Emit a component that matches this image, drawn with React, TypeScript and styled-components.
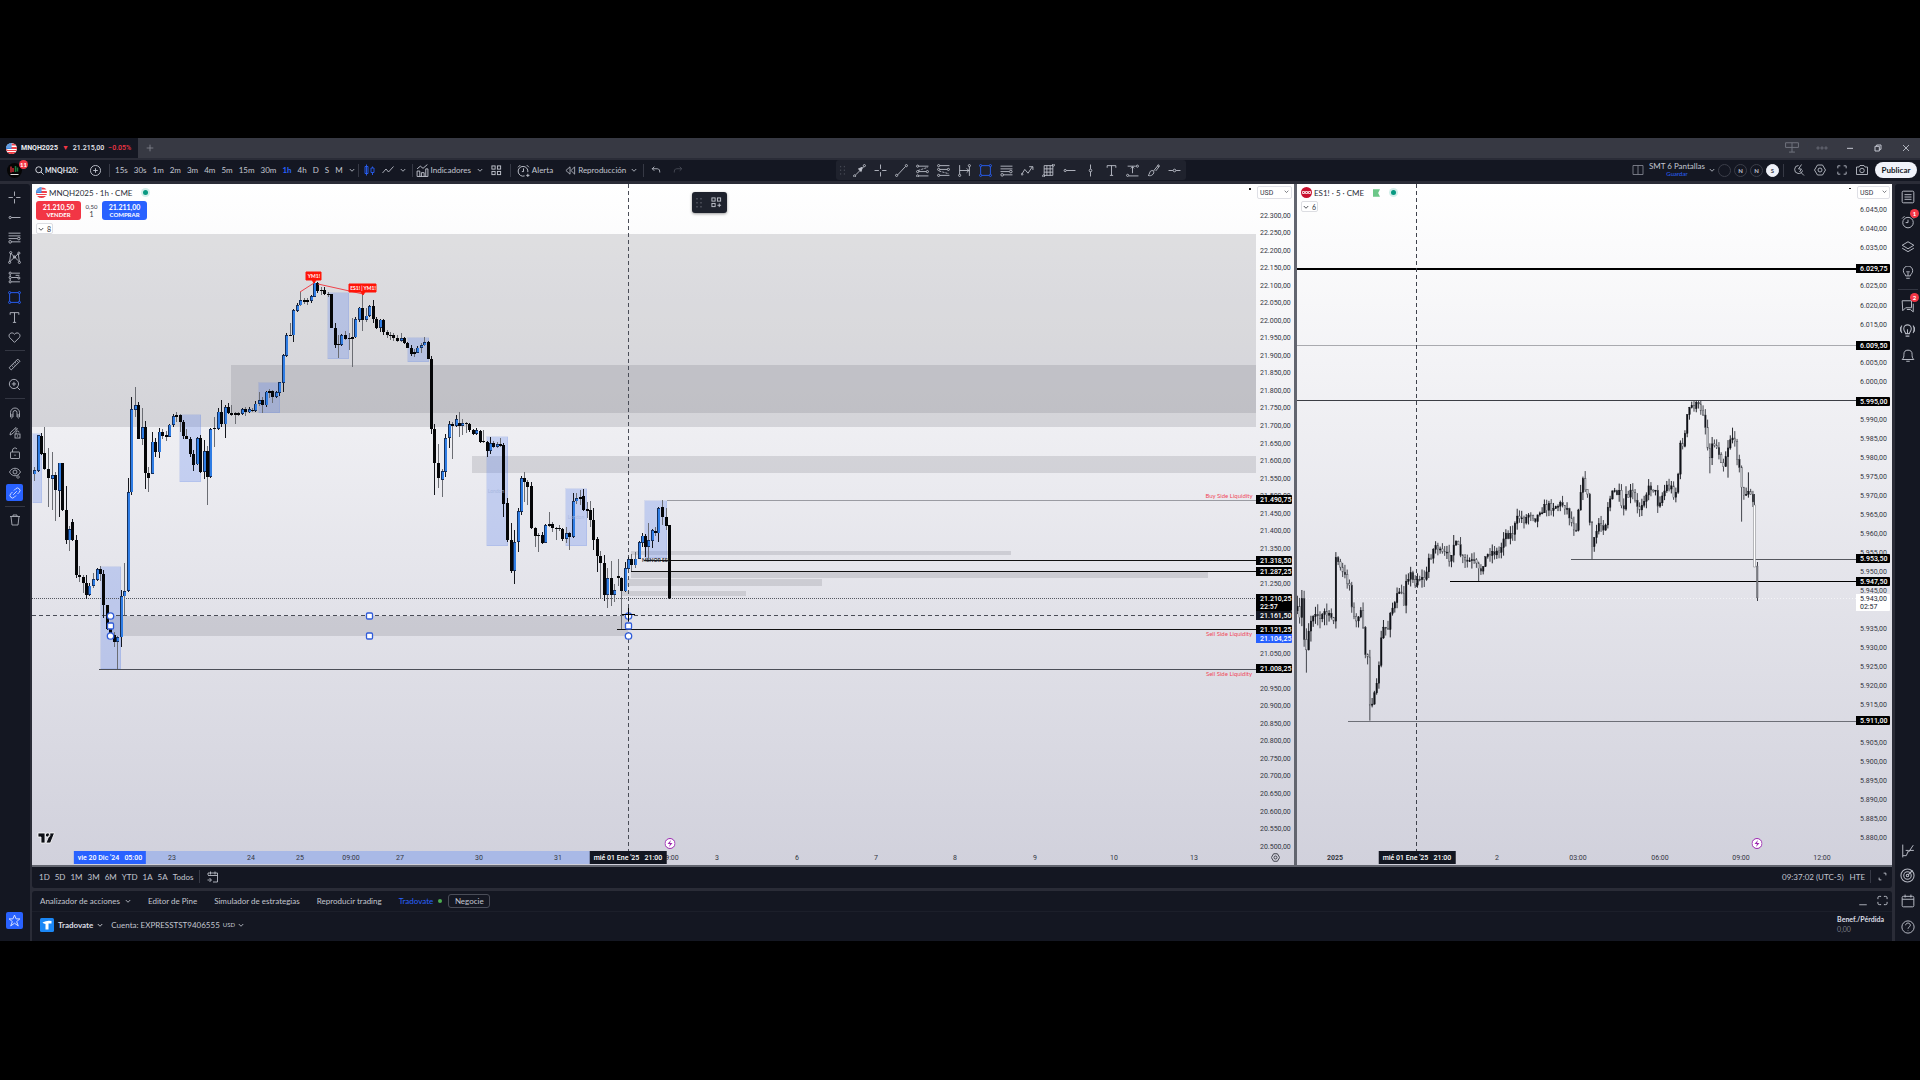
import React from "react";
import styled, { createGlobalStyle, css } from "styled-components";

const color = {
  panel: "#141722",
  frame: "#2a2c37",
  tabs: "#373943",
  text: "#c3c6d0",
  dim: "#787b86",
  blue: "#2962ff",
  red: "#f23645",
  ink: "#131722",
};

const GlobalStyle = createGlobalStyle`
  * { box-sizing: border-box; }
  body { margin: 0; background: #000; }
  button, select, input { font: inherit; color: inherit; margin: 0; padding: 0; border: 0; background: none; }
`;

/* ---------- icons ---------- */

const icons: Record<string, React.ReactNode> = {
  cross: <path d="M12 1v8M12 15v8M1 12h8M15 12h8" />,
  hray: <><circle cx="4" cy="12" r="2" /><path d="M6 12h17" /></>,
  fib: <><path d="M1 4h22M1 9h22M1 14h16M6 20h17" /><circle cx="20" cy="14" r="2.4" /><circle cx="4" cy="20" r="2.4" /></>,
  pattern: <><path d="M3 20 5 4l14 14M3 20 19 5l2 15M9 11l6 1" /><circle cx="5" cy="3" r="2" /><circle cx="20" cy="4" r="2" /><circle cx="3" cy="21" r="2" /><circle cx="21" cy="21" r="2" /><circle cx="12" cy="11" r="2" /></>,
  position: <><path d="M6 4h16M6 12h13M6 20h16M4 6v12M14 8h7" /><circle cx="4" cy="4" r="2" /><circle cx="4" cy="12" r="2" fill={color.panel} /><circle cx="4" cy="20" r="2" /><circle cx="20" cy="13" r="2" /></>,
  rect: <><path d="M5 3h14M5 21h14M3 5v14M21 5v14" /><circle cx="3" cy="3" r="2" /><circle cx="21" cy="3" r="2" /><circle cx="3" cy="21" r="2" /><circle cx="21" cy="21" r="2" /></>,
  text: <path d="M4 7V3h16v4M12 3v18M9 21h6" />,
  heart: <path d="M12 21 3 12C-1 6 7 0 12 6c5-6 13 0 9 6z" />,
  ruler: <path d="M2 18 18 2l4 4L6 22zM7 14l2 2M10 11l2 2M13 8l2 2M16 5l2 2" />,
  zoom: <><circle cx="11" cy="11" r="8.5" /><path d="m17 17 5 5M11 7v8M7 11h8" /></>,
  magnet: <><path d="M3 20V11a9 9 0 0 1 18 0v9h-5v-9a4 4 0 0 0-8 0v9zM3 16h5M16 16h5" /><path d="M5 23v1M19 23v1" /></>,
  pencilLock: <><path d="m2 16 1-5L14 1l3 3L6 14zM12 3l3 3" /><rect x="12" y="14" width="10" height="8" /><path d="M14 14v-3a3 3 0 0 1 6 0" /><circle cx="17" cy="18" r=".6" /></>,
  lock: <><rect x="3" y="10" width="18" height="13" rx="1" /><path d="M7 10V6a5 5 0 0 1 9-2M12 15v3" /></>,
  eye: <><path d="M1 10c5-10 17-10 22 0-5 10-17 10-22 0z" /><circle cx="12" cy="10" r="4" /><path d="m15 20 3-3 3 3-3 3z" /></>,
  link: <g transform="rotate(-45 12 12)"><path d="M10 7H5a5 5 0 0 0 0 10h5M14 7h5a5 5 0 0 1 0 10h-5M7 12h10" /></g>,
  trash: <path d="M2 5h20M8 5V2h8v3M4 5l2 17h12l2-17" />,
  star: <path d="m12 2 3 7h7l-6 5 3 8-7-5-7 5 3-8-6-5h7z" />,
  list: <><rect x="2" y="2" width="20" height="20" rx="2" /><path d="M6 8h12M6 12h12M6 16h12" /></>,
  alarm: <><circle cx="12" cy="13" r="9" /><path d="M12 8v5H8M2 6l4-4M22 6l-4-4" /></>,
  alarmPlus: <><path d="M20 15a9 9 0 1 0-6 7M12 8v6H9M2 6l4-4M22 6l-4-4M20 18v6M17 21h6" /></>,
  layers: <><path d="m12 3 10 6-10 6L2 9zM2 14l10 6 10-6" /></>,
  bulb: <><path d="M8 17c0-3-4-4-4-9a8 8 0 0 1 16 0c0 5-4 6-4 9zM9 21h6M12 17v-6M9 10h6" /></>,
  chat: <path d="M2 3h16v12H8l-5 5zM21 8v14l-5-4h-6" />,
  live: <><path d="M9 17c0-2-3-4-3-8a6 6 0 0 1 12 0c0 4-3 6-3 8zM9 21h6M12 16v-6M3 4c-2 4-2 8 0 12M21 4c2 4 2 8 0 12M0 6v8M24 6v8" /></>,
  bell: <path d="M2 18h20c-3-3-3-5-3-9a7 7 0 0 0-14 0c0 4 0 6-3 9zM9 21h6" />,
  dom: <path d="M3 1v22M3 20h6l4-9h9M13 14l8-12M8 11h4" />,
  radar: <><circle cx="12" cy="12" r="10.5" /><circle cx="12" cy="12" r="6" /><circle cx="12" cy="12" r="2" /><path d="m13 11 7-7" /></>,
  calendar: <><rect x="2" y="4" width="20" height="18" rx="2" /><path d="M2 9h20M7 1v5M17 1v5" /></>,
  help: <><circle cx="12" cy="12" r="10.5" /><path d="M8 9c0-5 8-5 8 0 0 3-4 3-4 6M12 18v1" /></>,
  search: <><circle cx="10" cy="10" r="8" /><path d="m16 16 7 7" /></>,
  plusRing: <><circle cx="12" cy="12" r="11" /><path d="M12 7v10M7 12h10" /></>,
  candles: <><path d="M5 1v22M2 5h6v14H2zM17 5v3M17 18v4M14 8h6v9h-6z" /></>,
  line: <path d="m1 18 7-8 5 6L23 5" />,
  indicators: <><path d="M2 9l6-5 5 4 8-7M2 23V13h5v10M10 23V16h5v7M18 23V9h4v14M2 23h20" /></>,
  grid: <><rect x="2" y="2" width="7" height="7" /><rect x="14" y="2" width="7" height="7" /><rect x="2" y="14" width="7" height="7" /><rect x="14" y="14" width="7" height="7" /></>,
  gridPlus: <><rect x="2" y="2" width="7" height="7" /><rect x="14" y="2" width="7" height="7" /><rect x="2" y="14" width="7" height="7" /><path d="M18 14v8M14 18h8" /></>,
  rewind: <path d="M11 4v16L2 12zM21 4v16l-8-8z" />,
  undo: <path d="M8 4 3 9l5 5M3 9h12c5 0 6 4 6 9" />,
  redo: <path d="m16 4 5 5-5 5M21 9H9c-5 0-6 4-6 9" />,
  grip: <path d="M8 2v3M16 2v3M8 10v3M16 10v3M8 18v3M16 18v3" />,
  arrow: <><path d="M5 20 20 5" /><path d="m17 6-7 3 5 5z" fill="currentColor" /><circle cx="3" cy="22" r="2" /><circle cx="21" cy="3" r="2" /></>,
  trend: <><path d="M5 20 19 5" /><circle cx="3" cy="21" r="2" /><circle cx="21" cy="3" r="2" /></>,
  longPos: <><path d="M5 4h18M5 14h14M5 22h18" /><path d="m4 12 18-6" strokeDasharray="4 2" /><circle cx="3" cy="4" r="2" /><circle cx="3" cy="14" r="2" /><circle cx="3" cy="22" r="2" /><circle cx="21" cy="14" r="2" /></>,
  shortPos: <><path d="M5 3h18M5 10h14M5 21h18" /><path d="m4 13 18 5" strokeDasharray="4 2" /><circle cx="3" cy="3" r="2" /><circle cx="3" cy="10" r="2" /><circle cx="3" cy="21" r="2" /><circle cx="21" cy="10" r="2" /></>,
  range: <><path d="M3 2v17M21 5v17M3 12h18M16 8l4 4-4 4" /><circle cx="3" cy="21" r="2" /><circle cx="21" cy="3" r="2" /></>,
  wave: <><path d="m2 18 5-8 6 7 8-12M15 5h7v6" /><circle cx="2" cy="19" r="1.5" /></>,
  table: <><path d="M4 3h16v18H4zM4 9h16M4 15h16M9 3v18M15 3v18" /><circle cx="3" cy="22" r="2" /><circle cx="21" cy="2" r="2" /></>,
  vline: <><path d="M12 1v8M12 14v9" /><circle cx="12" cy="12" r="2.4" /></>,
  anchored: <><path d="M3 4h15M12 5v12M9 8l3-3 3 3M5 22h18" /><circle cx="3" cy="21" r="2" /><circle cx="21" cy="4" r="2" /></>,
  brush: <><path d="M2 21c4-1 1-8 7-9 4 0 5 4 2 7s-6 3-9 2zM12 13 20 3M16 13l7-9" /><circle cx="21" cy="3" r="1.5" /></>,
  hline: <><path d="M1 12h8M15 12h8" /><circle cx="12" cy="12" r="2.4" /></>,
  layout: <path d="M2 3h20v18H2zM12 3v18" />,
  quick: <><path d="M19 13a8 8 0 1 1-8-10M16 17l6 6M17 1l-6 9h6l-4 6" /></>,
  settings: <><path d="M7 2h10l6 10-6 10H7L1 12z" /><circle cx="12" cy="12" r="4" /></>,
  full: <path d="M2 8V2h6M16 2h6v6M22 16v6h-6M8 22H2v-6" />,
  camera: <><path d="M1 6h5l2-3h8l2 3h5v15H1z" /><circle cx="12" cy="13" r="4.5" /></>,
  screen: <path d="M1 3h22v8H1zM12 3v16M7 19h10" />,
  dots: <><circle cx="4" cy="12" r="2.2" /><circle cx="12" cy="12" r="2.2" /><circle cx="20" cy="12" r="2.2" /></>,
  minimize: <path d="M3 13h18" />,
  restore: <path d="M3 7h13v14H3zM8 7V3h13v13h-5" />,
  close: <path d="m3 3 18 18M21 3 3 21" />,
  plus: <path d="M12 2v20M2 12h20" />,
  goto: <path d="M2 8V4h19v18h-9M2 9h19M7 1v6M16 1v6M1 18h7M5 14l4 4-4 4" />,
  corners: <path d="M15 3h6v6M3 15v6h6" />,
  expand: <path d="M2 9V6q0-3 3-3h4M15 3h4q3 0 3 3v3M22 15v3q0 3-3 3h-4M9 21H5q-3 0-3-3v-3" />,
  low: <path d="M3 21h18" />,
  chevron: <path d="m3 8 9 9 9-9" />,
};

function Icon({ name, size = 13, width = 1.7 }: { name: string; size?: number; width?: number }) {
  return (
    <svg width={size} height={size} viewBox="0 0 24 24" fill="none" stroke="currentColor" strokeWidth={width} aria-hidden="true">
      {icons[name]}
    </svg>
  );
}
const Chevron = () => <Icon name="chevron" size={6} width={3.4} />;

function UsFlag() {
  return (
    <svg width="11" height="11" viewBox="0 0 22 22" aria-hidden="true">
      <clipPath id="flagRound"><circle cx="11" cy="11" r="11" /></clipPath>
      <g clipPath="url(#flagRound)">
        <path fill="#fff" d="M0 0h22v22H0z" />
        <path fill="#ef4048" d="M11 1h11v4H11zM11 8h11v4H0v4h22v-2H0zM0 18h22v4H0z" />
        <path fill="#3b86dc" d="M0 0h11v12H0z" />
        <path fill="#cfe3fb" d="M3 3h2v2H3zM7 3h2v2H7zM3 7h2v2H3zM7 7h2v2H7z" />
      </g>
    </svg>
  );
}

/* ---------- shell ---------- */

const Page = styled.div`
  height: 100vh;
  min-height: 640px;
  padding: 138px 0 139px;
  background: #000;
  color: ${color.text};
  font: 8px/10px Lato, "Liberation Sans", sans-serif;
`;
const Shell = styled.div`
  height: 100%;
  display: flex;
  flex-direction: column;
  background: ${color.frame};
  overflow: hidden;
`;
const TabBar = styled.header`
  flex: none;
  display: flex;
  align-items: center;
  height: 20px;
  background: ${color.tabs};
`;
const Tab = styled.button`
  display: flex;
  align-items: center;
  gap: 4px;
  width: 138px;
  height: 20px;
  padding-left: 6px;
  background: ${color.panel};
  color: #e8eaf0;
  font-family: Roboto, sans-serif;
  font-size: 7px;
  font-weight: 500;
  white-space: nowrap;
  b { font-weight: 700; }
  span { color: ${color.red}; }
`;
const Spacer = styled.div<{ $grow?: number }>`flex: ${(p) => p.$grow ?? 1};`;
const IconButton = styled.button<{ $w?: number; $tone?: string }>`
  flex: none;
  display: flex;
  align-items: center;
  justify-content: center;
  width: ${(p) => p.$w ?? 21}px;
  height: 20px;
  color: ${(p) => p.$tone ?? color.text};
`;
const Divider = styled.i<{ $gap?: number }>`
  flex: none;
  width: 1px;
  height: 13px;
  margin: 0 ${(p) => p.$gap ?? 8}px;
  background: #363945;
`;

const Toolbar = styled.div`
  flex: none;
  display: flex;
  align-items: center;
  height: 21px;
  margin: 2px 0 3px;
  padding-bottom: 1px;
  background: ${color.panel};
  white-space: nowrap;
`;
const Avatar = styled.button`
  position: relative;
  display: flex;
  align-items: center;
  width: 29px;
  height: 20px;
  padding-left: 7px;
  margin-right: 6px;
`;
const Badge = styled.span`
  position: absolute;
  top: 0;
  right: 1px;
  min-width: 9px;
  height: 9px;
  border-radius: 5px;
  background: ${color.red};
  color: #fff;
  font-size: 6px;
  line-height: 9px;
  font-weight: 700;
  text-align: center;
`;
const SymbolSearch = styled.label`
  display: flex;
  align-items: center;
  gap: 1px;
  width: 46px;
  color: #e1e3ea;
  input { width: 36px; font-weight: 700; font-size: 7px; outline: 0; }
`;
const Row = styled.div<{ $gap?: number; $pad?: number }>`
  display: flex;
  align-items: center;
  gap: ${(p) => p.$gap ?? 0}px;
  padding-left: ${(p) => p.$pad ?? 0}px;
`;
const Interval = styled.button<{ $on?: boolean }>`
  ${(p) => p.$on && css`color: ${color.blue}; font-weight: 700;`}
`;
const ToolLabel = styled.button`
  display: flex;
  align-items: center;
  gap: 2px;
`;
const DrawBar = styled.div`
  display: flex;
  align-items: center;
  height: 20px;
  padding-right: 1px;
  border-radius: 3px;
  background: #1f222d;
`;
const LayoutName = styled.button`
  width: 58px;
  line-height: 7px;
  text-align: center;
  small { display: block; font-size: 6px; color: ${color.blue}; }
`;
const Ring = styled.button<{ $on?: boolean }>`
  width: 13px;
  height: 13px;
  border: 1px solid #3b3e49;
  border-radius: 50%;
  font-size: 6px;
  font-weight: 700;
  line-height: 11px;
  ${(p) => p.$on && css`background: #eff1f8; border-color: #eff1f8; color: #42454f;`}
`;
const Publish = styled.button`
  width: 42px;
  height: 16px;
  margin: 0 3px 0 3px;
  border-radius: 8px;
  background: #f0f2fa;
  color: ${color.ink};
  font-weight: 700;
`;

/* ---------- body ---------- */

const Body = styled.div`
  flex: 1;
  min-height: 0;
  display: flex;
`;
const Rail = styled.nav<{ $w: number }>`
  flex: none;
  display: flex;
  flex-direction: column;
  align-items: center;
  width: ${(p) => p.$w}px;
  background: ${color.panel};
`;
const LeftRail = styled(Rail)`
  padding: 3px 1px 10px 0;
  border-radius: 0 3px 0 0;
`;
const RightRail = styled(Rail)`
  padding-bottom: 2px;
  border-radius: 3px 0 0 0;
`;
const RailButton = styled.button<{ $h: number; $blue?: boolean }>`
  position: relative;
  display: flex;
  align-items: center;
  justify-content: center;
  width: 25px;
  height: ${(p) => p.$h}px;
  color: ${(p) => (p.$blue ? color.blue : "#b5b8c2")};
`;
const Pressed = styled.button`
  display: flex;
  align-items: center;
  justify-content: center;
  width: 17px;
  height: 17px;
  margin: 1px 0 2px;
  border-radius: 2px;
  background: ${color.blue};
  color: #dfe6ff;
`;
const RailRule = styled.hr<{ $gap?: number }>`
  width: 20px;
  height: 1px;
  margin: ${(p) => p.$gap ?? 3}px 0;
  border: 0;
  background: #343743;
`;
const Center = styled.main`
  flex: 1;
  min-width: 0;
  margin: 0 3px 0 2px;
  display: flex;
  flex-direction: column;
`;
const Charts = styled.div`
  flex: 1;
  min-height: 0;
  display: flex;
  gap: 3px;
  padding-bottom: 2px;
  background: #62656f;
`;

/* ---------- chart pane ---------- */

const Pane = styled.section<{ $grow: number; $axis: number }>`
  position: relative;
  flex: ${(p) => p.$grow} 1 0;
  min-width: 0;
  display: grid;
  grid-template-columns: 1fr ${(p) => p.$axis}px;
  grid-template-rows: 1fr 14px;
  background: linear-gradient(#ffffff, #d1d1dc);
  color: #33363f;
  overflow: hidden;
`;
const Plot = styled.div`
  position: relative;
  min-width: 0;
  min-height: 0;
  overflow: hidden;
`;
const Drawing = styled.svg`
  position: absolute;
  inset: 0;
  width: 100%;
  height: 100%;
`;
const Legend = styled.div`
  position: relative;
  display: flex;
  flex-direction: column;
  align-items: flex-start;
  gap: 3px;
  padding: 3px 0 0 4px;
`;
const LegendTitle = styled.div`
  display: flex;
  align-items: center;
  gap: 2px;
  height: 11px;
  color: #2a2d37;
  font-size: 8px;
`;
const Status = styled.i`
  width: 5px;
  height: 5px;
  margin-left: 9px;
  border-radius: 50%;
  background: #089981;
  box-shadow: 0 0 0 2px #d3efea;
`;
const Order = styled.button<{ $bg: string }>`
  width: 45px;
  height: 19px;
  border-radius: 3px;
  background: ${(p) => p.$bg};
  color: #fff;
  font-weight: 700;
  font-size: 7px;
  line-height: 8px;
  small { display: block; font-size: 6px; line-height: 7px; font-weight: 700; }
`;
const Spread = styled.div`
  width: 21px;
  font-size: 6px;
  line-height: 7px;
  text-align: center;
  label { display: block; }
  input { width: 12px; font-size: 7px; text-align: center; }
`;
const Count = styled.button`
  display: flex;
  align-items: center;
  justify-content: center;
  gap: 3px;
  width: 17px;
  height: 11px;
  border: 1px solid #dcdde2;
  border-radius: 2px;
  background: #fff;
  font-size: 7px;
`;
const Note = styled.span<{ $tone: string; $size?: number; $bold?: boolean }>`
  position: absolute;
  transform: translate(-50%, -50%);
  color: ${(p) => p.$tone};
  font-size: ${(p) => p.$size ?? 5}px;
  font-weight: ${(p) => (p.$bold ? 700 : 400)};
  line-height: 6px;
  white-space: nowrap;
`;
const Flash = styled.span`
  position: absolute;
  bottom: 2px;
  width: 11px;
  height: 11px;
  transform: translateX(-50%);
  svg { display: block; }
`;
const Palette = styled.div`
  position: absolute;
  top: 8px;
  left: 660px;
  display: flex;
  align-items: center;
  width: 35px;
  height: 21px;
  border-radius: 3px;
  background: #1e222d;
  color: #d1d4dc;
  box-shadow: 0 1px 3px rgba(0, 0, 0, 0.4);
`;
const PriceAxis = styled.div`
  position: relative;
  grid-row: 1 / 3;
  grid-column: 2;
  font-family: Roboto, sans-serif;
`;
const Currency = styled.select`
  position: absolute;
  z-index: 1;
  top: 2px;
  left: 1px;
  width: calc(100% - 3px);
  height: 13px;
  padding-left: 2px;
  border: 1px solid #dfe0e6;
  border-radius: 2px;
  background: #fff;
  appearance: none;
  font-size: 7px;
`;
const CurrencyMark = styled.span`
  position: absolute;
  z-index: 2;
  top: 3px;
  right: 5px;
  pointer-events: none;
`;
const Price = styled.span`
  position: absolute;
  left: 4px;
  margin-top: -4px;
  font-size: 7px;
  line-height: 8px;
`;
const PriceTag = styled.span<{ $bg?: string; $fg?: string; $thin?: boolean }>`
  position: absolute;
  left: 0;
  width: calc(100% - 2px);
  margin-top: -4px;
  padding: 1px 0 0 4px;
  border-radius: 0 1px 1px 0;
  background: ${(p) => p.$bg ?? "#000"};
  color: ${(p) => p.$fg ?? "#fff"};
  font-size: 7px;
  font-weight: ${(p) => (p.$thin ? 400 : 500)};
  line-height: 8px;
  small { display: block; font-size: 7px; }
`;
const TimeAxis = styled.div`
  position: relative;
  grid-column: 1;
  font-family: Roboto, sans-serif;
  font-size: 7px;
  line-height: 15px;
`;
const Time = styled.span<{ $bold?: boolean }>`
  position: absolute;
  transform: translateX(-50%);
  font-weight: ${(p) => (p.$bold ? 700 : 400)};
`;
const TimeBand = styled.i`
  position: absolute;
  inset: 0 auto 1px;
  background: #a9b9e6;
`;
const TimeTag = styled.span<{ $bg: string }>`
  position: absolute;
  top: 0;
  height: 13px;
  transform: translateX(-50%);
  padding: 0 4px;
  background: ${(p) => p.$bg};
  color: #fff;
  font-weight: 500;
  white-space: pre;
`;
const AxisGear = styled.button`
  position: absolute;
  right: 14px;
  bottom: 1px;
  height: 11px;
`;

/* ---------- data ---------- */

// x, body top, body bottom, high, low (thirds of a pixel), b = rising, k = falling
const partA = `103 750 763 740 783 b|113 645 752 645 757 b|124 648 702 640 706 k|133 700 747 620 750 k|145 747 775 685 862 k|155 765 777 695 870 b|165 765 810 755 902 k|176 728 812 728 892 b|187 728 870 728 872 k|197 870 961 797 972 k|206 927 961 917 992 b|217 905 961 898 964 k|227 961 1065 946 1075 k|238 1065 1072 1038 1085 k|248 1072 1088 1065 1120 k|259 1088 1125 1065 1138 k|268 1097 1125 1090 1127 b|279 1078 1097 1060 1103 b|290 1047 1080 1044 1082 b|301 1047 1063 1038 1082 k|310 1063 1156 1050 1195 k|320 1156 1228 1156 1230 k|331 1228 1245 1220 1252 k|341 1245 1265 1235 1280 k|352 1251 1265 1248 1347 b|362 1128 1252 1110 1280 b|373 1113 1129 1030 1185 b|383 816 1113 773 1115 b|392 568 817 530 825 b|404 556 570 500 590 b|415 556 656 545 658 k|425 622 656 565 675 b|434 622 760 603 808 k|445 760 775 742 815 k|455 665 761 637 763 b|466 665 697 655 712 k|476 635 697 625 715 b|487 635 647 627 657 k|497 645 650 632 662 k|506 614 650 612 652 b|518 588 615 583 620 b|528 585 590 577 607 b|539 585 607 583 635 k|549 607 648 600 658 k|559 648 656 628 658 k|569 656 702 650 710 k|580 702 735 690 752 k|590 654 733 650 735 b|601 654 755 645 758 k|611 694 755 660 777 b|620 694 770 678 855 k|631 627 771 625 773 b|642 625 628 590 680 k|653 575 627 563 630 b|663 575 613 540 620 k|674 562 613 555 655 b|683 562 580 548 582 k|694 580 584 555 588 k|704 580 584 575 612 k|714 580 585 575 587 b|725 567 582 563 584 b|735 567 577 560 588 k|746 567 577 562 580 b|756 569 573 565 577 k|766 551 573 543 576 b|776 541 552 515 558 b|787 541 556 530 578 k|797 515 556 512 562 b|808 514 518 507 535 k|817 514 531 510 550 k|828 516 531 513 534 b|838 487 518 485 528 b|848 405 489 402 515 b|859 345 408 338 410 b|869 344 347 310 348 k|880 270 346 268 365 b|890 255 272 250 275 b|901 241 256 215 258 b|911 241 247 233 252 k|922 241 247 235 255 b|932 228 243 225 250 b|942 188 230 185 232 b|951 190 213 187 218 k|962 209 213 200 225 b|973 209 223 200 225 k|983 223 226 217 232 k|993 223 323 222 325 k|1004 323 375 310 385 k|1013 373 376 345 413 k|1024 345 375 342 378 b|1035 345 356 332 360 k|1046 354 358 340 390 b|1055 352 357 295 440 k|1066 297 352 290 355 b|1076 263 300 260 305 b|1087 263 300 220 332 k|1097 287 300 265 305 b|1108 258 288 255 292 b|1118 258 297 240 310 k|1128 297 323 290 326 k|1139 299 323 297 335 b|1149 299 335 297 345 k|1160 335 346 330 355 k|1170 344 347 335 360 k|1180 346 355 340 362 k|1190 354 362 345 365 k|1202 354 362 338 365 b|1211 354 370 350 373 k|1221 370 383 365 385 k|1232 383 403 375 408 k|1242 397 403 388 412 b|1252 383 398 378 400 b|1263 375 383 370 398 b|1273 367 376 352 378 b|1283 367 416 362 418 k|1294 416 627 408 643 k|1303 627 730 612 825 k|1315 730 775 672 803 k`;
const partB = `65 573 600 568 652 b|75 474 576 463 590 b|86 432 474 423 505 b|95 433 438 425 537 k|107 418 437 405 440 b|118 429 438 395 470 k|127 430 438 417 465 b|137 430 433 425 460 k|148 432 450 428 455 k|158 450 462 447 465 k|169 451 462 443 465 b|179 452 486 450 490 k|190 484 487 450 490 k|200 486 513 482 530 k|210 489 513 470 522 b|220 490 500 483 505 k|231 492 500 485 503 b|241 492 497 473 502 k|250 495 672 490 710 k|261 668 780 655 785 k|272 780 872 730 878 k|283 786 873 750 912 b|293 694 786 683 815 b|303 595 695 587 705 b|313 595 607 577 665 k|322 605 620 600 675 k|334 618 743 605 747 k|345 743 767 740 800 k|355 765 769 760 815 k|365 766 789 755 792 k|375 735 789 732 790 b|386 733 738 697 742 b|397 733 745 726 755 k|407 743 747 740 780 k|417 745 748 735 752 k|427 748 777 745 782 k|437 759 777 740 788 b|448 759 770 757 810 k|459 663 771 640 773 b|469 655 664 640 672 b|479 650 656 630 675 b|489 648 690 628 692 k|500 688 693 665 715 k|510 690 720 662 740 k|520 720 780 685 810 k|531 778 829 772 875 k|541 829 848 812 955 k|551 848 945 825 963 k|561 894 945 865 983 b|572 894 945 843 977 k|583 930 944 912 965 b|593 888 894 838 918 k|603 893 934 890 1048 k|614 864 934 845 936 b|625 838 866 830 868 b|634 838 855 822 873 k|645 836 856 815 865 b|656 787 837 782 838 b|665 767 788 760 800 b|675 767 802 762 830 k|685 781 801 730 835 b|697 751 782 748 805 b|706 752 760 740 767 k|715 684 760 682 785 b|727 682 711 660 735 k|739 710 738 685 750 k|748 736 955 735 957 k`;

type Candle = { x: number; top: number; bottom: number; high: number; low: number; up: boolean };
const parse = (src: string, ox: number, oy: number): Candle[] =>
  src.split("|").map((row) => {
    const p = row.split(" ");
    const n = p.slice(0, 5).map((v) => Number(v) / 3);
    return { x: ox + n[0], top: oy + n[1], bottom: oy + n[2], high: oy + n[3], low: oy + n[4], up: p[5] === "b" };
  });
const hourly = [...parse(partA, 0, 220), ...parse(partB, 420, 280)];

const track: [number, number][] = [[20, 680], [28, 730], [35, 650], [44, 805], [50, 800], [58, 730], [70, 700], [78, 690], [90, 720], [105, 695], [115, 712], [131, 712], [135, 535], [143, 540], [150, 565], [160, 585], [175, 605], [182, 625], [186, 680], [196, 740], [205, 700], [217, 705], [222, 815], [234, 830], [239, 965], [248, 960], [258, 945], [265, 870], [272, 790], [280, 745], [295, 745], [300, 690], [315, 675], [328, 630], [342, 672], [347, 595], [360, 580], [372, 610], [385, 590], [400, 600], [412, 580], [416, 535], [430, 510], [440, 490], [450, 520], [465, 525], [478, 532], [492, 490], [505, 505], [520, 548], [540, 545], [555, 550], [569, 582], [580, 545], [600, 515], [630, 518], [642, 460], [665, 465], [685, 410], [705, 420], [720, 395], [740, 418], [748, 388], [780, 380], [822, 372], [835, 395], [848, 440], [862, 440], [868, 335], [880, 305], [890, 330], [897, 390], [903, 490], [908, 508], [925, 430], [945, 440], [955, 365], [972, 335], [988, 345], [998, 415], [1005, 360], [1025, 335], [1045, 395], [1060, 355], [1080, 320], [1095, 325], [1100, 375], [1115, 350], [1130, 318], [1145, 325], [1155, 350], [1163, 300], [1170, 202], [1183, 180], [1190, 120], [1200, 80], [1215, 76], [1230, 82], [1243, 100], [1250, 190], [1258, 225], [1270, 185], [1285, 210], [1300, 255], [1312, 205], [1325, 160], [1340, 220], [1352, 265], [1356, 358], [1370, 332], [1385, 352], [1390, 375]];
const spikes: Record<number, [number, number]> = { 49: [745, 878], 136: [520, 652], 239: [900, 1022], 569: [545, 603], 908: [440, 538], 492: [465, 505], 1258: [190, 280], 1313: [190, 293], 1356: [340, 425], 1373: [277, 350], 1325: [143, 190], 880: [290, 345], 1215: [62, 95] };

function fiveMinute(): Candle[] {
  const at = (x: number) => {
    const i = Math.max(1, track.findIndex((t) => t[0] >= x));
    const [x0, y0] = track[i - 1];
    const [x1, y1] = track[i];
    return y0 + ((x - x0) / (x1 - x0)) * (y1 - y0);
  };
  const out: Candle[] = [];
  let seed = 7;
  const rnd = () => ((seed = (seed * 16807) % 2147483647) / 2147483647);
  let prev = at(22);
  for (let x = 22; x < 1390; x += 6.8) {
    if (x > 131 && x < 135) { prev = 545; continue; }
    const next = at(x) + (rnd() - 0.5) * 28;
    const reach = x < 130 ? 34 : 24;
    let high = Math.min(prev, next) - rnd() * reach;
    let low = Math.max(prev, next) + rnd() * reach;
    for (const key of Object.keys(spikes)) {
      if (Math.abs(Number(key) - x) <= 3.4) {
        high = Math.min(high, spikes[Number(key)][0]);
        low = Math.max(low, spikes[Number(key)][1]);
      }
    }
    high = Math.max(high, 62);
    out.push({ x: 1290 + x / 3, top: 380 + Math.min(prev, next) / 3, bottom: 380 + Math.max(prev, next) / 3, high: 380 + high / 3, low: 380 + low / 3, up: next < prev });
    prev = next;
  }
  return out;
}
const minutes = fiveMinute();

// Shaded price zones and session boxes: x, y, width, height
const zones = [[32, 234, 1224, 193], [231, 365, 1025, 48], [472, 456, 784, 17], [631, 551, 380, 4], [631, 572, 577, 6], [627, 579, 195, 7], [622, 591, 124, 5], [110, 616, 518, 20]];
const sessions = [[32, 433, 10, 70], [100, 566, 21, 103], [179, 414, 22, 68], [258, 382, 22, 31], [327, 292, 22, 67], [407, 337, 22, 25], [486, 436, 22, 110], [565, 488, 22, 58], [644, 500, 23, 58]];
const handles: [number, number, boolean][] = [[110, 616, true], [110, 626, false], [110, 636, true], [369, 616, false], [369, 636, false], [628, 616, true], [628, 626, false], [628, 636, true]];

const spanish = (n: number) => {
  const [whole, cents] = n.toFixed(2).split(".");
  return `${whole.replace(/(\d)(\d{3})$/, "$1.$2")},${cents}`;
};
const steps = (from: number, to: number, by: number, skip: number[]) => {
  const out: number[] = [];
  for (let v = from; v >= to; v -= by) if (!skip.includes(v)) out.push(v);
  return out;
};
const micro = { ticks: steps(22300, 20500, 50, [21300, 21200, 21150, 21100, 21000]), y: (p: number) => 31.7 + (22300 - p) * 0.3505 };
const mini = { ticks: steps(6045, 5880, 5, [6030, 6010, 5995, 5940, 5910]), y: (p: number) => 26.4 + (6045 - p) * 3.804 };
const down = (y: number) => ({ top: `${(y / 681) * 100}%` });
const place = (x: number, y: number, x0: number, w: number) => ({ left: `${((x - x0) / w) * 100}%`, top: `${((y - 184) / 667) * 100}%` });
const across = (x: number, x0: number, w: number) => ({ left: `${((x - x0) / w) * 100}%` });

function FlashIcon() {
  return (
    <svg width="11" height="11" viewBox="0 0 22 22">
      <circle cx="11" cy="11" r="10" fill="#fff" stroke="#9c27b0" strokeWidth="2" />
      <path d="m13 4-7 8h5l-2 6 7-8h-5z" fill="#9c27b0" />
    </svg>
  );
}

function MicroChart() {
  return (
    <Pane $grow={1262} $axis={38}>
      <Plot>
        <Drawing viewBox="32 184 1224 667" preserveAspectRatio="none" shapeRendering="crispEdges">
          {zones.map(([x, y, w, h], i) => <rect key={i} x={x} y={y} width={w} height={h} fill="rgba(118,120,128,.22)" />)}
          {sessions.map(([x, y, w, h], i) => <rect key={i} x={x + 0.5} y={y + 0.5} width={w - 1} height={h - 1} fill="rgba(88,130,240,.27)" stroke="rgba(88,120,220,.14)" />)}
          <g stroke="#111" fill="none">
            <path d="M667 500.5H1256" stroke="#9a9ba2" />
            <path d="M644 560.5H1256" />
            <path d="M631 571.5H1256" />
            <path d="M617 629.5H1256" />
            <path d="M99 669.5H1256" stroke="#4b4e57" />
            <path d="M32 598.5H1256" stroke="#555861" strokeDasharray="1 1" />
            <path d="M32 615.5H1256M628.5 184V851" stroke="#4a4d57" strokeDasharray="4 3" />
          </g>
          {hourly.map((c, i) => {
            const x = Math.round(c.x);
            const h = Math.max(1, c.bottom - c.top);
            return (
              <g key={i}>
                <path d={`M${x + 0.5} ${c.high}V${c.low}`} stroke={c.low - c.high > 2.2 * h ? "#6b6d73" : "#15171d"} />
                {c.up && h > 2
                  ? <><rect x={x - 1} y={c.top} width="3" height={h} fill="#14305e" /><rect x={x} y={c.top + 0.6} width="2" height={h - 1.2} fill="#2f7de4" /></>
                  : <rect x={x - 1} y={c.top} width="3" height={h} fill="#050608" />}
              </g>
            );
          })}
          <g shapeRendering="auto" stroke="#f0424a" fill="none">
            <path d="m300 292 14-9M318 284l45 10" />
            <path d="M306 272h15v8h-5l-2 3-2-3h-6zM349 284h27v8h-11l-2 3-2-3h-12z" fill="#ff1408" stroke="#ff1408" />
          </g>
          <g shapeRendering="auto" fill="#fff" stroke="#2f5bd8" strokeWidth="1.3">
            {handles.map(([x, y, round], i) => round
              ? <circle key={i} cx={x + 0.5} cy={y} r="3.2" />
              : <rect key={i} x={x - 2.5} y={y - 3} width="6" height="6" rx="1.2" />)}
          </g>
          <path d="M622 614.5h13M628.5 608v13" stroke="#000" />
          <path d="M1249 188h2v2h-2z" fill="#222" />
        </Drawing>
        <Legend>
          <LegendTitle><UsFlag />MNQH2025 · 1h · CME<Status /></LegendTitle>
          <Row>
            <Order $bg={color.red}>21.210,50<small>VENDER</small></Order>
            <Spread><label htmlFor="qty">0,50</label><input id="qty" defaultValue="1" /></Spread>
            <Order $bg={color.blue}>21.211,00<small>COMPRAR</small></Order>
          </Row>
          <Count><Chevron />8</Count>
        </Legend>
        <Note $tone="#fff" $bold style={place(314, 276, 32, 1224)}>YM1!</Note>
        <Note $tone="#fff" $bold style={place(363, 288, 32, 1224)}>ES1! | YM1!</Note>
        <Note $tone="#22252f" $bold style={place(656, 560, 32, 1224)}>MENOR SSL</Note>
        <Note $tone="#a9b8e0" style={place(496, 491, 32, 1224)}>London</Note>
        <Note $tone="#a9b8e0" style={place(576, 517, 32, 1224)}>London</Note>
        <Note $tone="#f0485a" $size={6} style={place(1229, 496, 32, 1224)}>Buy Side Liquidity</Note>
        <Note $tone="#f0485a" $size={6} style={place(1229, 634, 32, 1224)}>Sell Side Liquidity</Note>
        <Note $tone="#f0485a" $size={6} style={place(1229, 674, 32, 1224)}>Sell Side Liquidity</Note>
        <Flash style={across(669.5, 32, 1224)}><FlashIcon /></Flash>
        <Palette>
          <IconButton $w={14} $tone="#6a6d78" aria-label="Mover"><Icon name="grip" size={12} width={2} /></IconButton>
          <IconButton $w={20} aria-label="Añadir herramienta"><Icon name="gridPlus" size={11} width={2} /></IconButton>
        </Palette>
        <Logo />
      </Plot>
      <PriceAxis>
        <Currency aria-label="Divisa"><option>USD</option></Currency>
        <CurrencyMark><Icon name="chevron" size={5} width={3} /></CurrencyMark>
        {micro.ticks.map((p) => <Price key={p} style={down(micro.y(p))}>{spanish(p)}</Price>)}
        {[21490.75, 21318.5, 21287.25].map((p) => <PriceTag key={p} style={down(micro.y(p))}>{spanish(p)}</PriceTag>)}
        <PriceTag style={down(micro.y(21210.25))}>21.210,25<small>22:57</small></PriceTag>
        <PriceTag $bg="#141722" style={down(micro.y(21161.5))}>21.161,50</PriceTag>
        <PriceTag style={down(micro.y(21121.25))}>21.121,25</PriceTag>
        <PriceTag $bg={color.blue} style={down(454)}>21.104,25</PriceTag>
        <PriceTag style={down(micro.y(21008.25))}>21.008,25</PriceTag>
        <AxisGear aria-label="Ajustes de escala"><Icon name="settings" size={9} width={2.4} /></AxisGear>
      </PriceAxis>
      <TimeAxis>
        <TimeBand style={{ left: "3.4%", width: "45%" }} />
        {([[172, "23"], [251, "24"], [300, "25"], [351, "09:00"], [400, "27"], [479, "30"], [558, "31"], [670, "09:00"], [717, "3"], [797, "6"], [876, "7"], [955, "8"], [1035, "9"], [1114, "10"], [1194, "13"]] as [number, string][]).map(([x, t]) => (
          <Time key={x} style={across(x, 32, 1224)}>{t}</Time>
        ))}
        <TimeTag $bg={color.blue} style={across(110, 32, 1224)}>{"vie 20 Dic '24   05:00"}</TimeTag>
        <TimeTag $bg={color.ink} style={across(628, 32, 1224)}>{"mié 01 Ene '25   21:00"}</TimeTag>
      </TimeAxis>
    </Pane>
  );
}

const LogoMark = styled.svg`
  position: absolute;
  left: 5px;
  bottom: 7px;
`;
function Logo() {
  return (
    <LogoMark width="18" height="12" viewBox="0 0 36 24" aria-label="TradingView">
      <path d="M2 2h14v20H8V10H2zM20 2h2a4 4 0 1 1 0 8 4 4 0 0 1-2-8zM26 2h9l-8 20h-9z" fill="#0d0f16" stroke="#fff" strokeWidth="1.6" />
    </LogoMark>
  );
}

const FlagMark = styled.svg`margin-left: 7px;`;

function MiniChart() {
  const tags = [6029.75, 6009.5, 5995, 5953.5, 5947.5, 5911];
  return (
    <Pane $grow={595} $axis={36}>
      <Plot>
        <Drawing viewBox="1297 184 559 667" preserveAspectRatio="none" shapeRendering="crispEdges">
          <g fill="none" stroke="#111">
            <path d="M1297 269H1856" stroke="#000" strokeWidth="2" />
            <path d="M1297 345.5H1856" stroke="#a9aaaf" />
            <path d="M1297 400.5H1856" stroke="#3c3e45" />
            <path d="M1571 559.5H1856" stroke="#55575e" />
            <path d="M1450 581.5H1856" stroke="#000" />
            <path d="M1348 721.5H1856" stroke="#6d6f77" />
            <path d="M1297 598.5H1856" stroke="#f4f4f7" strokeDasharray="1 2" />
            <path d="M1416.5 184V851" stroke="#3f424c" strokeDasharray="4 3" />
          </g>
          <g shapeRendering="auto">
            {minutes.map((c, i) => (
              <g key={i}>
                <path d={`M${c.x} ${c.high}V${c.low}`} stroke={c.up ? "#24262c" : "#44464d"} strokeWidth="1" />
                <rect x={c.x - 0.7} y={c.top} width="1.5" height={Math.max(1, c.bottom - c.top)} fill={c.up || i % 3 === 0 ? "#101218" : "#c9cad0"} stroke={c.up ? "#101218" : "#44464d"} strokeWidth=".4" />
              </g>
            ))}
            <path d="M1754.5 494v12M1757.5 562v39" stroke="#3e4046" />
            <path d="M1753.5 505h2v62h-2z" fill="#fff" stroke="#77797f" strokeWidth=".5" />
            <path d="M1756.5 566h1.5v32h-1.5z" fill="#85878d" stroke="#55575d" strokeWidth=".5" />
          </g>
          <path d="M1849 188h2v1h-2z" fill="#222" />
        </Drawing>
        <Legend>
          <LegendTitle>
            <svg width="11" height="11" viewBox="0 0 22 22"><circle cx="11" cy="11" r="11" fill="#c8102e" /><path d="M3 9h4v4H3zM9 9h4v4H9zM15 9h4v4h-4z" fill="none" stroke="#fff" strokeWidth="1.6" /></svg>
            ES1! · 5 · CME
            <FlagMark width="7" height="8" viewBox="0 0 15 16"><path d="M0 0h15l-4 8 4 8H0z" fill="#6cc788" /></FlagMark>
            <Status />
          </LegendTitle>
          <Count><Chevron />6</Count>
        </Legend>
        <Flash style={across(1756.5, 1297, 559)}><FlashIcon /></Flash>
      </Plot>
      <PriceAxis>
        <Currency aria-label="Divisa"><option>USD</option></Currency>
        <CurrencyMark><Icon name="chevron" size={5} width={3} /></CurrencyMark>
        {mini.ticks.map((p) => <Price key={p} style={down(mini.y(p))}>{spanish(p)}</Price>)}
        <PriceTag $bg="#fff" $fg="#222530" $thin style={down(414)}>5.943,00<small>02:57</small></PriceTag>
        {tags.map((p) => <PriceTag key={p} style={down(mini.y(p))}>{spanish(p)}</PriceTag>)}
      </PriceAxis>
      <TimeAxis>
        <Time $bold style={across(1335, 1297, 559)}>2025</Time>
        {([[1497, "2"], [1578, "03:00"], [1660, "06:00"], [1741, "09:00"], [1822, "12:00"]] as [number, string][]).map(([x, t]) => (
          <Time key={x} style={across(x, 1297, 559)}>{t}</Time>
        ))}
        <TimeTag $bg={color.ink} style={across(1417, 1297, 559)}>{"mié 01 Ene '25   21:00"}</TimeTag>
      </TimeAxis>
    </Pane>
  );
}

/* ---------- bottom ---------- */

const RangeBar = styled.div`
  flex: none;
  display: flex;
  align-items: center;
  height: 21px;
  padding: 0 3px 2px 7px;
  border-radius: 0 0 3px 3px;
  background: ${color.panel};
`;
const PanelTabs = styled.div`
  flex: none;
  display: flex;
  align-items: center;
  height: 21px;
  margin-top: 3px;
  padding: 0 1px 1px 8px;
  border-radius: 3px 3px 0 0;
  border-bottom: 1px solid #1c1f2a;
  background: ${color.panel};
`;
const PanelTab = styled.button<{ $on?: boolean }>`
  display: flex;
  align-items: center;
  gap: 5px;
  margin-right: 17px;
  ${(p) => p.$on && css`margin-right: 6px; color: ${color.blue};`}
`;
const LiveDot = styled.i`
  width: 4px;
  height: 4px;
  border-radius: 50%;
  background: #4caf50;
`;
const TradeButton = styled.button`
  width: 42px;
  height: 14px;
  border: 1px solid #4a4d58;
  border-radius: 3px;
`;
const Account = styled.div`
  flex: none;
  display: flex;
  align-items: center;
  height: 29px;
  padding: 0 8px 3px;
  background: ${color.panel};
`;
const Broker = styled.button`
  display: flex;
  align-items: center;
  gap: 4px;
  margin-right: 8px;
  font-weight: 700;
  color: #dcdee5;
`;
const AccountPick = styled.button`
  display: flex;
  align-items: center;
  gap: 3px;
  small { font-size: 6px; }
`;
const Profit = styled.div`
  align-self: flex-start;
  padding-top: 2px;
  font-size: 7px;
  b { color: #dcdee5; }
  span { display: block; color: ${color.dim}; }
`;

const drawTools = ["arrow", "cross", "trend", "longPos", "shortPos", "range", "rect", "fib", "wave", "table", "hray", "vline", "text", "anchored", "brush", "hline"];

export default function App() {
  return (
    <Page>
      <GlobalStyle />
      <Shell>
        <TabBar>
          <Tab><UsFlag /><b>MNQH2025</b><span>▼</span>21.215,00<span>−0.05%</span></Tab>
          <IconButton $w={24} $tone="#858893" aria-label="Nueva pestaña"><Icon name="plus" size={8} width={2.4} /></IconButton>
          <Spacer />
          <IconButton $w={30} $tone="#70737e" aria-label="Pantalla"><Icon name="screen" size={14} /></IconButton>
          <Divider $gap={0} />
          <IconButton $w={28} $tone="#70737e" aria-label="Más"><Icon name="dots" size={12} /></IconButton>
          <IconButton $w={28} aria-label="Minimizar"><Icon name="minimize" size={8} width={3} /></IconButton>
          <IconButton $w={28} aria-label="Restaurar"><Icon name="restore" size={8} width={3} /></IconButton>
          <IconButton $w={28} aria-label="Cerrar"><Icon name="close" size={8} width={2.6} /></IconButton>
        </TabBar>

        <Toolbar>
          <Avatar aria-label="Cuenta">
            <svg width="15" height="15" viewBox="0 0 30 30"><circle cx="15" cy="15" r="15" fill="#050505" /><path d="M8 7v12M12 10v8" stroke="#c62b34" strokeWidth="3" /><path d="M17 6v12M21 9v8" stroke="#1d7a3c" strokeWidth="3" /><path d="M7 23h16" stroke="#ddd" strokeWidth="2" /></svg>
            <Badge>11</Badge>
          </Avatar>
          <SymbolSearch><Icon name="search" size={9} width={2.4} /><input aria-label="Símbolo" defaultValue="MNQH20:" /></SymbolSearch>
          <IconButton $w={28} aria-label="Comparar"><Icon name="plusRing" size={11} width={2} /></IconButton>
          <Divider $gap={0} />
          <Row $gap={6} $pad={5}>
            {["15s", "30s", "1m", "2m", "3m", "4m", "5m", "15m", "30m", "1h", "4h", "D", "S", "M"].map((t) => <Interval key={t} $on={t === "1h"}>{t}</Interval>)}
            <Chevron />
          </Row>
          <Divider $gap={3} />
          <IconButton $w={17} $tone={color.blue} aria-label="Velas"><Icon name="candles" size={12} /></IconButton>
          <IconButton $w={18} aria-label="Línea"><Icon name="line" size={12} /></IconButton>
          <IconButton $w={12} aria-label="Tipo de gráfico"><Chevron /></IconButton>
          <Divider $gap={3} />
          <Row $gap={4}>
            <ToolLabel><Icon name="indicators" />Indicadores</ToolLabel>
            <IconButton $w={10} aria-label="Favoritos"><Chevron /></IconButton>
            <IconButton $w={15} aria-label="Plantillas"><Icon name="grid" size={11} width={2} /></IconButton>
          </Row>
          <Divider $gap={6} />
          <Row $gap={12}>
            <ToolLabel><Icon name="alarmPlus" />Alerta</ToolLabel>
            <ToolLabel><Icon name="rewind" size={11} />Reproducción</ToolLabel>
          </Row>
          <IconButton $w={16} aria-label="Opciones"><Chevron /></IconButton>
          <Divider $gap={1} />
          <IconButton $w={22} aria-label="Deshacer"><Icon name="undo" size={10} width={2} /></IconButton>
          <IconButton $w={21} $tone="#4c4f5a" aria-label="Rehacer"><Icon name="redo" size={10} width={2} /></IconButton>
          <Spacer />
          <DrawBar>
            <IconButton $w={13} $tone="#50535e" aria-label="Mover"><Icon name="grip" size={11} width={2} /></IconButton>
            {drawTools.map((t) => <IconButton key={t} $tone={t === "rect" ? color.blue : undefined} aria-label={t}><Icon name={t} size={13} width={1.6} /></IconButton>)}
          </DrawBar>
          <Spacer $grow={3} />
          <IconButton $w={20} $tone="#858893" aria-label="Diseño"><Icon name="layout" size={12} /></IconButton>
          <LayoutName>SMT 6 Pantallas<small>Guardar</small></LayoutName>
          <IconButton $w={12} aria-label="Diseños"><Chevron /></IconButton>
          <Row $gap={3}><Ring aria-label="Vacío" /><Ring>N</Ring><Ring>N</Ring><Ring $on>S</Ring></Row>
          <Divider $gap={4} />
          <IconButton $w={21} aria-label="Búsqueda rápida"><Icon name="quick" size={12} /></IconButton>
          <IconButton $w={22} aria-label="Ajustes"><Icon name="settings" size={12} /></IconButton>
          <IconButton aria-label="Pantalla completa"><Icon name="full" size={10} width={2} /></IconButton>
          <IconButton $w={20} aria-label="Captura"><Icon name="camera" size={12} /></IconButton>
          <Publish>Publicar</Publish>
        </Toolbar>

        <Body>
          <LeftRail $w={30}>
            {["cross", "hray", "fib", "pattern", "position", "rect", "text", "heart"].map((t) => <RailButton key={t} $h={20} $blue={t === "rect"} aria-label={t}><Icon name={t} /></RailButton>)}
            <RailRule />
            {["ruler", "zoom"].map((t) => <RailButton key={t} $h={20} aria-label={t}><Icon name={t} /></RailButton>)}
            <RailRule $gap={4} />
            {["magnet", "pencilLock", "lock", "eye"].map((t) => <RailButton key={t} $h={20} aria-label={t}><Icon name={t} size={12} /></RailButton>)}
            <Pressed aria-label="link"><Icon name="link" size={12} /></Pressed>
            <RailRule />
            <RailButton $h={20} aria-label="trash"><Icon name="trash" size={12} /></RailButton>
            <Spacer />
            <Pressed aria-label="star"><Icon name="star" /></Pressed>
          </LeftRail>

          <Center>
            <Charts><MicroChart /><MiniChart /></Charts>
            <RangeBar>
              <Row $gap={5}>
                {["1D", "5D", "1M", "3M", "6M", "YTD", "1A", "5A", "Todos"].map((t) => <button key={t}>{t}</button>)}
              </Row>
              <Divider $gap={6} />
              <IconButton $w={13} aria-label="Ir a"><Icon name="goto" size={12} /></IconButton>
              <Spacer />
              <Row $gap={6}><button>09:37:02 (UTC-5)</button><button>HTE</button></Row>
              <Divider $gap={5} />
              <IconButton $w={13} aria-label="Maximizar gráfico"><Icon name="corners" size={9} width={2.4} /></IconButton>
            </RangeBar>
            <PanelTabs>
              <PanelTab>Analizador de acciones<Chevron /></PanelTab>
              <PanelTab>Editor de Pine</PanelTab>
              <PanelTab>Simulador de estrategias</PanelTab>
              <PanelTab>Reproducir trading</PanelTab>
              <PanelTab $on>Tradovate<LiveDot /></PanelTab>
              <TradeButton>Negocie</TradeButton>
              <Spacer />
              <IconButton aria-label="Contraer"><Icon name="low" size={10} width={2} /></IconButton>
              <IconButton $w={18} aria-label="Expandir"><Icon name="expand" size={11} width={2} /></IconButton>
            </PanelTabs>
            <Account>
              <Broker>
                <svg width="14" height="14" viewBox="0 0 28 28"><rect width="28" height="28" rx="3" fill="#1b87f5" /><path d="M5 9q9-5 18-3v5h-6v12h-6V12q-4-1-6-3z" fill="#fff" /></svg>
                Tradovate<Chevron />
              </Broker>
              <AccountPick>Cuenta: EXPRESSTST9406555 <small>USD</small><Chevron /></AccountPick>
              <Spacer />
              <Profit><b>Benef./Pérdida</b><span>0,00</span></Profit>
            </Account>
          </Center>

          <RightRail $w={25}>
            <RailButton $h={25} aria-label="Lista"><Icon name="list" size={14} /></RailButton>
            <RailButton $h={25} aria-label="Alertas"><Icon name="alarm" size={14} /><Badge>1</Badge></RailButton>
            <RailButton $h={26} aria-label="Capas"><Icon name="layers" size={14} /></RailButton>
            <RailButton $h={26} aria-label="Ideas"><Icon name="bulb" size={14} /></RailButton>
            <RailRule />
            <RailButton $h={25} aria-label="Chats"><Icon name="chat" size={14} /><Badge>2</Badge></RailButton>
            <RailButton $h={25} aria-label="Directos"><Icon name="live" size={15} /></RailButton>
            <RailButton $h={25} aria-label="Notificaciones"><Icon name="bell" size={14} /></RailButton>
            <Spacer />
            <RailButton $h={25} aria-label="Profundidad"><Icon name="dom" size={14} /></RailButton>
            <RailButton $h={25} aria-label="Radar"><Icon name="radar" size={15} /></RailButton>
            <RailButton $h={26} aria-label="Calendario"><Icon name="calendar" size={14} /></RailButton>
            <RailButton $h={25} aria-label="Ayuda"><Icon name="help" size={14} /></RailButton>
          </RightRail>
        </Body>
      </Shell>
    </Page>
  );
}
